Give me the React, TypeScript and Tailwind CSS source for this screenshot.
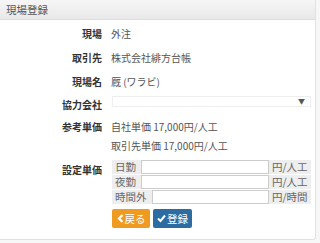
import React from 'react';

const font = { fontFamily: '"Noto Sans CJK JP", "Noto Sans", sans-serif' };

const Label = ({ children, className = '' }: { children: React.ReactNode; className?: string }) => (
  <div className={`w-[102px] shrink-0 text-right font-bold text-[10px] text-[#333] ${className}`}>{children}</div>
);

const RateInput = ({ name, unit, addonW }: { name: string; unit: string; addonW: string }) => (
  <div className="flex h-[14px] items-stretch">
    <span className={`${addonW} bg-[#eeeeee] pl-[3px] leading-[14px] text-[10.5px] text-[#666]`}>{name}</span>
    <span className="flex-1 border border-[#cccccc] bg-white" />
    <span className="w-[42px] bg-[#eeeeee] pl-[3px] leading-[14px] text-[10.5px] text-[#666]">{unit}</span>
  </div>
);

const App: React.FC = () => {
  return (
    <div className="h-[243px] w-[320px] bg-[#f7f7f7]" style={font}>
      <div className="w-[316px] h-[240px] border-r border-b border-[#e2e2e2] bg-white rounded-br-[3px]">
        <div className="h-[20px] border-b border-[#dddddd] bg-gradient-to-b from-[#f6f6f6] to-[#e9e9e9] pl-[6px] leading-[19px] text-[10.5px] text-[#555]">
          現場登録
        </div>

        <div className="pt-[1px]">
          <div className="flex h-[24px] items-center gap-[9px]">
            <Label>現場</Label>
            <span className="text-[10px] text-[#555]">外注</span>
          </div>
          <div className="flex h-[24px] items-center gap-[9px]">
            <Label>取引先</Label>
            <span className="text-[10px] text-[#555]">株式会社緋方台帳</span>
          </div>
          <div className="flex h-[24px] items-center gap-[9px]">
            <Label>現場名</Label>
            <span className="text-[10px] text-[#555]">厩 (ワラビ)</span>
          </div>
          <div className="flex h-[23px] items-start gap-[10px]">
            <Label className="pt-[4px]">協力会社</Label>
            <div className="mt-[3px] flex h-[11px] w-[199px] items-center justify-end border border-[#eeeeee] pr-[5px]">
              <span className="text-[7px] leading-none text-[#555]">▼</span>
            </div>
          </div>
          <div className="flex gap-[9px]">
            <Label className="pt-[3px]">参考単価</Label>
            <div className="text-[10px] text-[#555]">
              <div className="h-[22px] pt-[3px]">自社単価 17,000円/人工</div>
              <div className="h-[18px]">取引先単価 17,000円/人工</div>
            </div>
          </div>
          <div className="mt-[4px] flex gap-[10px]">
            <Label className="pt-[2px]">設定単価</Label>
            <div className="w-[199px]">
              <div className="flex flex-col gap-[1px]">
                <RateInput name="日勤" unit="円/人工" addonW="w-[29px]" />
                <RateInput name="夜勤" unit="円/人工" addonW="w-[29px]" />
                <RateInput name="時間外" unit="円/時間" addonW="w-[40px]" />
              </div>
              <div className="mt-[5px] flex gap-[3px]">
                <button className="flex h-[19px] w-[38px] items-center justify-center gap-[1px] rounded-[2px] bg-[#ef9b22] text-[10.5px] text-white">
                  <svg width="7" height="9" viewBox="0 0 7 9"><path d="M5.5 1 L2 4.5 L5.5 8" stroke="white" strokeWidth="2.2" fill="none" /></svg>
                  戻る
                </button>
                <button className="flex h-[19px] w-[39px] items-center justify-center gap-[1px] rounded-[2px] bg-[#2d6ca2] text-[10.5px] text-white">
                  <svg width="9" height="9" viewBox="0 0 9 9"><path d="M1 4.5 L3.5 7 L8 1.5" stroke="white" strokeWidth="2" fill="none" /></svg>
                  登録
                </button>
              </div>
            </div>
          </div>
        </div>
      </div>
    </div>
  );
};

export default App;
